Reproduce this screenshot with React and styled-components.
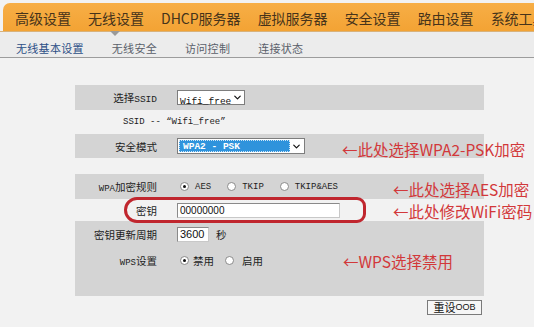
import styled, { createGlobalStyle } from "styled-components";
import { ChevronDown } from "lucide-react";

const GlobalStyle = createGlobalStyle`
  html, body {
    margin: 0;
    padding: 0;
  }
  body {
    background: #f2f2f2;
    font-family: "Noto Sans CJK SC", sans-serif;
  }
`;

const Page = styled.div`
  width: 534px;
  height: 327px;
  overflow: hidden;
  padding-top: 3px;
  box-sizing: border-box;
  background: #f2f2f2;
`;

const TopNav = styled.nav`
  display: flex;
  align-items: stretch;
  gap: 17px;
  height: 28px;
  margin-left: 3px;
  padding: 2px 0 0 12px;
  box-sizing: border-box;
  background: linear-gradient(#f7ae46, #f3a334);
  border-radius: 7px 0 0 0;
  white-space: nowrap;
`;

const NavItem = styled.span`
  position: relative;
  display: flex;
  align-items: center;
  font-size: 14px;
  color: #46331a;
  flex-shrink: 0;

  ${({ $active }) =>
    $active &&
    `
    &::after {
      content: "";
      position: absolute;
      top: 100%;
      left: 50%;
      margin-left: -6px;
      border-left: 5px solid transparent;
      border-right: 5px solid transparent;
      border-top: 5px solid #9a9a9a;
      z-index: 2;
    }
  `}
`;

const SubNav = styled.div`
  display: flex;
  align-items: center;
  gap: 28px;
  height: 27px;
  padding: 6px 0 0 16px;
  box-sizing: border-box;
  background: #ececec;
  border-top: 1px solid #d9b27a;
  border-bottom: 1px solid #9c9c9c;
`;

const SubItem = styled.span`
  font-size: 11px;
  letter-spacing: 0.3px;
  color: ${({ $active }) => ($active ? "#2c4f86" : "#5a5f6a")};
`;

const Content = styled.div`
  padding: 27px 0 0 75px;
`;

const Form = styled.div`
  position: relative;
  width: 409px;
`;

const Row = styled.div`
  display: grid;
  grid-template-columns: 82px 1fr;
  column-gap: 20px;
  align-items: center;
  height: ${({ $h }) => $h}px;
  background: ${({ $gray }) => ($gray ? "#d4d4d4" : "transparent")};
`;

const GrayBlock = styled.div`
  background: #d4d4d4;
  height: 75px;
`;

const Label = styled.span`
  text-align: right;
  font-size: 10.5px;
  color: #1e1e1e;
  white-space: nowrap;
`;

const Lat = styled.span`
  font-family: "Liberation Mono", monospace;
  font-size: ${({ $size }) => $size || 9}px;
  font-weight: ${({ $bold }) => ($bold ? 700 : 400)};
`;

const Note = styled.div`
  height: 24px;
  display: flex;
  align-items: center;
  padding-left: 48px;
  color: #222;
`;

const Spacer = styled.div`
  height: ${({ $h }) => $h}px;
`;

const SelectBox = styled.div`
  display: flex;
  align-items: center;
  justify-content: space-between;
  width: ${({ $w }) => $w}px;
  height: ${({ $h }) => $h || 15}px;
  box-sizing: border-box;
  padding: 1px;
  background: #fff;
  border: 1px solid #7d7d7d;
  color: #111;
`;

const SelectText = styled.span`
  padding-left: 1px;
  line-height: 1;
`;

const Highlight = styled.span`
  flex: 1;
  height: 100%;
  display: flex;
  align-items: center;
  padding-left: 3px;
  background: #2f93dc;
  color: #fff;
  border: 1px dotted #cfe6f7;
  box-sizing: border-box;
`;

const Arrow = styled.span`
  display: flex;
  align-items: center;
  justify-content: center;
  width: 13px;
  color: #111;
`;

const TextInput = styled.div`
  display: flex;
  align-items: center;
  width: ${({ $w }) => $w}px;
  height: 15px;
  box-sizing: border-box;
  padding-left: 2px;
  background: #fff;
  border: 1px solid #8a8a8a;
  border-right-color: #c8c8c8;
  border-bottom-color: #c8c8c8;
  font-family: "Liberation Sans", sans-serif;
  font-size: ${({ $size }) => $size || 10}px;
  color: #111;
`;

const Inline = styled.div`
  display: flex;
  align-items: center;
  gap: ${({ $gap }) => $gap}px;
`;

const RadioGroup = styled.div`
  display: flex;
  align-items: center;
  gap: ${({ $gap }) => $gap}px;
  padding-left: 3px;
`;

const Option = styled.label`
  display: flex;
  align-items: center;
  gap: ${({ $gap }) => $gap || 6}px;
  font-size: 10.5px;
  color: #1e1e1e;
`;

const Radio = styled.span`
  position: relative;
  width: 9px;
  height: 9px;
  border-radius: 50%;
  border: 1px solid #8a8a8a;
  background: #fff;
  box-sizing: border-box;

  &::after {
    content: "";
    display: ${({ $on }) => ($on ? "block" : "none")};
    position: absolute;
    left: 2px;
    top: 2px;
    width: 3px;
    height: 3px;
    border-radius: 50%;
    background: #111;
  }
`;

const Sub = styled.div`
  display: grid;
  grid-template-columns: 82px 1fr;
  column-gap: 20px;
  align-items: center;
  height: ${({ $h }) => $h}px;
`;

const Unit = styled.span`
  font-size: 10.5px;
  color: #1e1e1e;
`;

const ButtonRow = styled.div`
  display: flex;
  justify-content: flex-end;
  padding: 4px 2px 0 0;
`;

const Button = styled.button`
  width: 55px;
  height: 15px;
  padding: 0;
  display: flex;
  align-items: center;
  justify-content: center;
  background: #f6f6f6;
  border: 1px solid #7a7a7a;
  font-family: "Noto Sans CJK SC", sans-serif;
  font-size: 11px;
  color: #111;
  line-height: 1;
`;

const Small = styled.span`
  font-family: "Liberation Sans", sans-serif;
  font-size: 9px;
`;

const Ring = styled.div`
  position: absolute;
  left: 49px;
  top: 112px;
  width: 242px;
  height: 26px;
  box-sizing: border-box;
  border: 3.5px solid #c0262e;
  border-radius: 13px 9px 9px 13px;
  pointer-events: none;
`;

const Annotation = styled.span`
  position: absolute;
  left: ${({ $x }) => $x}px;
  top: ${({ $y }) => $y}px;
  font-size: 15.5px;
  line-height: 20px;
  color: #d2383a;
  white-space: nowrap;
`;

const navItems = ["高级设置", "无线设置", "DHCP服务器", "虚拟服务器", "安全设置", "路由设置", "系统工具"];
const subItems = ["无线基本设置", "无线安全", "访问控制", "连接状态"];

const Chevron = () => (
  <Arrow>
    <ChevronDown size={11} strokeWidth={2.6} />
  </Arrow>
);

export default function App() {
  return (
    <Page>
      <GlobalStyle />
      <TopNav>
        {navItems.map((item) => (
          <NavItem key={item} $active={item === "无线设置"}>
            {item}
          </NavItem>
        ))}
      </TopNav>
      <SubNav>
        {subItems.map((item, i) => (
          <SubItem key={item} $active={i === 0}>
            {item}
          </SubItem>
        ))}
      </SubNav>

      <Content>
        <Form>
          <Row $gray $h={25}>
            <Label>
              选择<Lat $size={9.5}>SSID</Lat>
            </Label>
            <SelectBox $w={68}>
              <SelectText>
                <Lat $size={9.5}>Wifi_free</Lat>
              </SelectText>
              <Chevron />
            </SelectBox>
          </Row>

          <Note>
            <Lat>SSID -- “Wifi_free”</Lat>
          </Note>

          <Row $gray $h={24}>
            <Label>安全模式</Label>
            <SelectBox $w={128} $h={16}>
              <Highlight>
                <Lat $size={9.5} $bold>
                  WPA2 - PSK
                </Lat>
              </Highlight>
              <Chevron />
            </SelectBox>
          </Row>

          <Spacer $h={16} />

          <Row $gray $h={25}>
            <Label>
              <Lat>WPA</Lat>加密规则
            </Label>
            <RadioGroup $gap={16}>
              <Option>
                <Radio $on />
                <Lat>AES</Lat>
              </Option>
              <Option>
                <Radio />
                <Lat>TKIP</Lat>
              </Option>
              <Option>
                <Radio />
                <Lat>TKIP&amp;AES</Lat>
              </Option>
            </RadioGroup>
          </Row>

          <Row $h={22}>
            <Label>密钥</Label>
            <TextInput $w={163}>00000000</TextInput>
          </Row>

          <GrayBlock>
            <Sub $h={26}>
              <Label>密钥更新周期</Label>
              <Inline $gap={7}>
                <TextInput $w={32} $size={11}>
                  3600
                </TextInput>
                <Unit>秒</Unit>
              </Inline>
            </Sub>
            <Sub $h={26}>
              <Label>
                <Lat>WPS</Lat>设置
              </Label>
              <RadioGroup $gap={11}>
                <Option $gap={4}>
                  <Radio $on />
                  禁用
                </Option>
                <Option $gap={8}>
                  <Radio />
                  启用
                </Option>
              </RadioGroup>
            </Sub>
          </GrayBlock>

          <ButtonRow>
            <Button>
              重设<Small>OOB</Small>
            </Button>
          </ButtonRow>

          <Ring />
          <Annotation $x={267} $y={54}>←此处选择WPA2-PSK加密</Annotation>
          <Annotation $x={318} $y={94}>←此处选择AES加密</Annotation>
          <Annotation $x={318} $y={116}>←此处修改WiFi密码</Annotation>
          <Annotation $x={268} $y={166}>←WPS选择禁用</Annotation>
        </Form>
      </Content>
    </Page>
  );
}
